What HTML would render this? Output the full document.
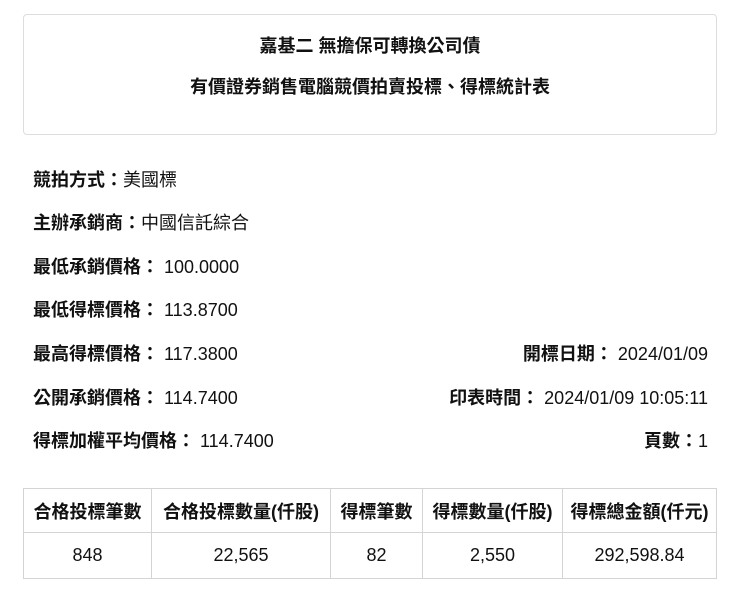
<!DOCTYPE html>
<html><head><meta charset="utf-8"><style>
body{margin:0;width:740px;height:595px;background:#fff;font-family:"Liberation Sans","Noto Sans CJK TC",sans-serif;color:#111;position:relative;overflow:hidden}
.box{position:absolute;left:23px;top:14px;width:692px;height:119px;border:1px solid #ddd;border-radius:4px;text-align:center}
.t1{position:absolute;top:20px;width:100%;font-size:18px;font-weight:bold;line-height:22px}
.t2{position:absolute;top:61px;width:100%;font-size:18px;font-weight:bold;line-height:22px}
.r{position:absolute;left:33px;font-size:18px;line-height:22px}
.rr{position:absolute;right:32px;font-size:18px;line-height:22px}
b{font-weight:bold}
table{position:absolute;left:23px;top:488px;width:694px;border-collapse:collapse;font-size:18px}
td{border:1.5px solid #d4d4d4;text-align:center;padding:0;white-space:nowrap}
tr.h td{height:43px;font-weight:bold}
tr.d td{height:45px}
</style></head><body>
<div class="box"><div class="t1">嘉基二 無擔保可轉換公司債</div><div class="t2">有價證券銷售電腦競價拍賣投標、得標統計表</div></div>
<div class="r" style="top:169px"><b>競拍方式：</b>美國標</div>
<div class="r" style="top:212px"><b>主辦承銷商：</b>中國信託綜合</div>
<div class="r" style="top:256px"><b>最低承銷價格：</b> 100.0000</div>
<div class="r" style="top:299px"><b>最低得標價格：</b> 113.8700</div>
<div class="r" style="top:343px"><b>最高得標價格：</b> 117.3800</div>
<div class="r" style="top:387px"><b>公開承銷價格：</b> 114.7400</div>
<div class="r" style="top:430px"><b>得標加權平均價格：</b> 114.7400</div>
<div class="rr" style="top:343px"><b>開標日期：</b> 2024/01/09</div>
<div class="rr" style="top:387px"><b>印表時間：</b> 2024/01/09 10:05:11</div>
<div class="rr" style="top:430px"><b>頁數：</b>1</div>
<table>
<tr class="h"><td style="width:127px">合格投標筆數</td><td style="width:178px">合格投標數量(仟股)</td><td style="width:91px">得標筆數</td><td style="width:139px">得標數量(仟股)</td><td>得標總金額(仟元)</td></tr>
<tr class="d"><td>848</td><td>22,565</td><td>82</td><td>2,550</td><td>292,598.84</td></tr>
</table>
</body></html>
